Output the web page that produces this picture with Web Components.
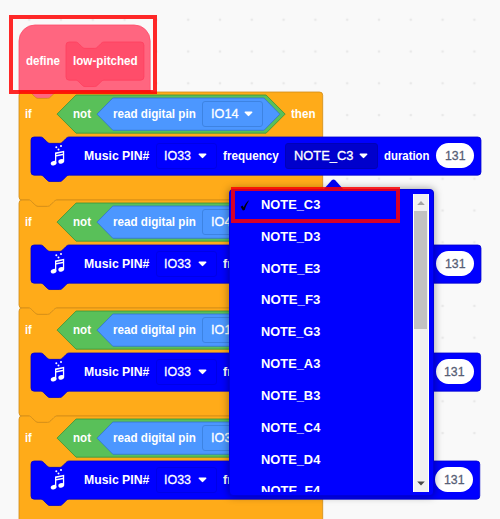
<!DOCTYPE html>
<html lang="en"><head><meta charset="utf-8"><title>Block workspace</title>
<style>
html,body{margin:0;width:500px;height:519px;overflow:hidden;background:#f9f9f9;font-family:"Liberation Sans",Arial,sans-serif}
</style></head><body>
<block-workspace>
  <define-block></define-block>
  <if-block pin="IO14"></if-block>
  <if-block pin="IO4" covered></if-block>
  <if-block pin="IO1" end="565.5" covered></if-block>
  <if-block pin="IO3" end="564.5" covered></if-block>
  <note-menu slot="overlay"></note-menu>
  <mark-box slot="overlay" style="left:9px;top:15px;width:140px;height:71px"></mark-box>
  <mark-box slot="overlay" style="left:231px;top:187px;width:160.5px;height:28px"></mark-box>
</block-workspace>
<script>
const K = 0.795; // size of one block unit in px
const NOTCH = 'c2,0 3,1 4,2 l4,4 c1,1 2,2 4,2 h12 c2,0 3,-1 4,-2 l4,-4 c1,-1 2,-2 4,-2';
const TAB = 'c-2,0 -3,1 -4,2 l-4,4 c-1,1 -2,2 -4,2 h-12 c-2,0 -3,-1 -4,-2 l-4,-4 c-1,-1 -2,-2 -4,-2';
const commandPath = (w, h) => `M0,4 a4,4 0 0,1 4,-4 H12 ${NOTCH} H${w-4} a4,4 0 0,1 4,4 V${h-4} a4,4 0 0,1 -4,4 H48 ${TAB} H4 a4,4 0 0,1 -4,-4 z`;
const shape = (d, fill, stroke) => `<svg class="shape" width="1" height="1"><path transform="scale(${K})" d="${d}" fill="${fill}" stroke="${stroke}"/></svg>`;
const BASE = `:host{display:block;position:relative;box-sizing:border-box;flex:none}
.shape{position:absolute;left:0;top:0;overflow:visible;z-index:0}
.row{display:flex;align-items:center;position:relative;height:100%}`;

class BlockElement extends HTMLElement {
  connectedCallback() {
    if (this.shadowRoot) return;
    this.attachShadow({mode:'open'}).innerHTML = `<style>${BASE}${this.css()}</style>${this.markup()}`;
    this.ready();
  }
  css() { return ''; }
  markup() { return '<slot></slot>'; }
  ready() {}
  get(name, fallback) { return this.getAttribute(name) ?? fallback; }
}

// A one-line label condensed to fill the width in "w"
customElements.define('block-label', class extends BlockElement {
  css() { const thin = this.get('weight','700') === '400';
    return `:host{width:${this.get('w')}px;margin-left:${this.get('gap',0)}px;height:16px;line-height:16px;font-size:13.6px;font-weight:${this.get('weight','700')};color:${this.get('color','#fff')};${thin?'-webkit-text-stroke:.3px currentColor;':''}}
    span{display:inline-block;white-space:pre;transform-origin:0 50%}`; }
  markup() { return '<span><slot></slot></span>'; }
  ready() {
    const s = this.shadowRoot.querySelector('span');
    const natural = s.getBoundingClientRect().width;
    if (natural) s.style.transform = `scaleX(${this.get('w') / natural})`;
  }
});

customElements.define('block-select', class extends BlockElement {
  css() { return `:host{display:flex;align-items:center;justify-content:space-between;width:${this.get('w')}px;height:26px;margin-left:${this.get('gap',0)}px;padding:0 9px 0 7.7px;border:1px solid ${this.get('line')};border-radius:3px;background:${this.get('fill','transparent')}}
    svg{flex:none}`; }
  markup() { return `<block-label w="${this.get('tw')}" weight="400">${this.get('value')}</block-label>
    <svg width="9" height="6" viewBox="0 0 9 6"><path d="M1.2,.5 H7.8 Q9,.7 8.2,1.7 L5.2,4.8 Q4.5,5.5 3.8,4.8 L.8,1.7 Q0,.7 1.2,.5z" fill="#fff"/></svg>`; }
});

customElements.define('music-icon', class extends BlockElement {
  css() { return ':host{width:16px;height:24px;margin-left:19px} svg{display:block}'; }
  markup() { return `<svg width="16" height="24" viewBox="0 0 16 24" fill="#fff">
    <ellipse cx="3.6" cy="19.2" rx="2.9" ry="2.2" transform="rotate(-20 3.6 19.2)"/><ellipse cx="11.2" cy="17.4" rx="2.9" ry="2.2" transform="rotate(-20 11.2 17.4)"/>
    <path d="M5,8.4 L14.2,6.7 V17.5 H12.9 V11.2 L6.3,12.5 V19.3 H5z M6.3,9.9 V11 L12.9,9.7 V8.5z" fill-rule="evenodd"/>
    <circle cx="6.3" cy="3.2" r="1"/><circle cx="8.5" cy="5.4" r="1"/><circle cx="11" cy="2" r="1"/></svg>`; }
});

customElements.define('block-prototype', class extends BlockElement {
  css() { return ':host{width:78px;height:39px;margin-left:6px} .row{padding-left:7px}'; }
  markup() { return shape(commandPath(98,48), '#ff4d6a', '#ff3f5f') + '<div class="row"><block-label w="64.7">low-pitched</block-label></div>'; }
});

customElements.define('define-block', class extends BlockElement {
  css() { return ':host{height:67.3px;width:131px} .row{padding:5px 0 0 7px;box-sizing:border-box}'; }
  markup() { return shape(`M0,20 a20,20 0 0,1 20,-20 H145 a20,20 0 0,1 20,20 V84.6 H48 ${TAB} H0z`, '#ff6680', '#ff4d6a') +
    '<div class="row"><block-label w="34">define</block-label><block-prototype></block-prototype></div>'; }
});

customElements.define('pin-reporter', class extends BlockElement {
  css() { return ':host{width:183px;height:32px;margin-left:6px} .row{padding-left:15.5px}'; }
  markup() { return shape('M20,0 H210 L230,20.3 L210,40.6 H20 L0,20.3z', '#4c97ff', '#3373cc') +
    `<div class="row"><block-label w="82.8">read digital pin</block-label><block-select gap="6.8" w="60.4" tw="${this.get('pin').length>3?27.6:20.5}" value="${this.get('pin')}" line="#3d83e2"></block-select></div>`; }
});

customElements.define('not-operator', class extends BlockElement {
  css() { return ':host{width:228px;height:38.5px;margin-left:25px} .row{padding-left:16.3px}'; }
  markup() { return shape('M24,0 H263 L287,24 L263,48 H24 L0,24z', '#59c059', '#389438') +
    `<div class="row"><block-label w="18">not</block-label><pin-reporter pin="${this.get('pin')}"></pin-reporter></div>`; }
});

customElements.define('music-block', class extends BlockElement {
  css() { return `:host{height:38.2px;width:450px;margin-left:12.7px} .row{width:450px}
    .gap{flex:none}
    .pill{flex:none;display:flex;align-items:center;justify-content:center;box-sizing:border-box;width:38px;height:25.5px;margin-left:6.5px;border-radius:13px;background:#fff}`; }
  markup() {
    const end = +this.get('end', 566), d = (566-end)*.8;
    // Behind an open menu only the start of the "frequency" label shows
    const middle = this.hasAttribute('covered')
      ? `<block-label gap="6" w="9">fr</block-label><div class="gap" style="width:${197.3-d}px"></div>`
      : `<block-label gap="6" w="55.8">frequency</block-label>
         <block-select gap="6.5" w="92.5" tw="59.4" value="NOTE_C3" line="#0000b8" fill="#0000cc"></block-select>
         <block-label gap="6" w="45.5">duration</block-label>`;
    return shape(commandPath(end,48), '#0000ff', '#0000cc') +
    `<div class="row"><music-icon></music-icon><block-label gap="17.8" w="65.3">Music PIN#</block-label>
    <block-select gap="6.2" w="61.4" tw="27" value="IO33" line="#0000e6"></block-select>
    ${middle}
    <div class="pill"><block-label w="20.5" weight="400" color="#575e75">131</block-label></div></div>`; }
});

customElements.define('if-block', class extends BlockElement {
  css() { return `:host{height:108px;width:304px} .head{height:44.2px} .head .row{padding-left:6.6px}
    .then{margin-left:6.4px}`; }
  markup() { const covered = this.hasAttribute('covered');
    return shape(commandPath(382,136), '#ffab19', '#cf8b17') +
    `<div class="head"><div class="row"><block-label w="6.7">if</block-label><not-operator pin="${this.get('pin')}"></not-operator>${covered?'':'<block-label class="then" w="24.5">then</block-label>'}</div></div>
    <music-block end="${this.get('end',566)}" ${covered?'covered':''}></music-block>`; }
});

customElements.define('note-menu', class extends BlockElement {
  css() { return `:host{position:absolute;left:229px;top:189px;width:204.5px;height:307px;border:1px solid #0000d8;border-radius:4px;background:#00f;box-shadow:0 0 9px rgba(0,0,0,.4);display:flex;padding:4px 4px 3px 0}
    .tip{position:absolute;left:93px;top:-11px}
    .list{flex:1;overflow:hidden;display:flex;flex-direction:column;margin-top:-5px;height:302.5px}
    .item{flex:none;height:31.84px;display:flex;align-items:center}
    .check{width:31.3px;height:16px;display:block}
    .bar{box-sizing:border-box;width:16px;border:1px solid #fff;border-width:0 1px;background:#f0f0f0;display:flex;flex-direction:column;align-items:center}
    .bar svg{flex:none;display:block}.thumb{width:13px;height:118px;background:#c1c1c1}.rest{flex:1}`; }
  markup() {
    const notes = ['C3','D3','E3','F3','G3','A3','B3','C4','D4','E4'];
    return `<svg class="tip" width="21" height="12"><path d="M0,11 L8.5,1.5 Q10.5,-.5 12.5,1.5 L21,11z" fill="#0000f0"/></svg>
    <div class="list">${notes.map((n,i)=>`<div class="item"><span class="check">${i?'':'<svg width="24" height="16"><path d="M10.6,9.8 L12.6,8.5 L13.7,10.6 C15,7.5 16.7,4.9 19.2,3 C17.4,6.2 15.8,9.4 14.7,13 L12.9,13.4z" fill="#000010"/></svg>'}</span><block-label w="59.3">NOTE_${n}</block-label></div>`).join('')}</div>
    <div class="bar"><svg width="14" height="17"><path d="M3.2,11 L7,7 L10.8,11z" fill="#a3a3a3"/></svg><div class="thumb"></div><div class="rest"></div><svg width="14" height="17"><path d="M3.2,6.5 L7,10.5 L10.8,6.5z" fill="#484848"/></svg></div>`;
  }
});

customElements.define('mark-box', class extends BlockElement {
  css() { return ':host{position:absolute;box-sizing:content-box;border:4px solid rgba(255,0,0,.84)}'; }
});

customElements.define('block-workspace', class extends BlockElement {
  css() { return `:host{width:500px;height:519px;overflow:hidden;background:#f9f9f9}
    .grid{position:absolute;left:0;top:0}
    .stack{display:flex;flex-direction:column;align-items:flex-start;padding:25.1px 0 0 18.8px;position:relative}`; }
  markup() { return `<svg class="grid" width="500" height="519"><defs><pattern id="dots" x="13.3" y="3.8" width="31.8" height="31.8" patternUnits="userSpaceOnUse"><path d="M14.6,15.9 h2.6 M15.9,14.6 v2.6" stroke="#e4e4e4" stroke-width="1"/></pattern></defs><rect width="500" height="519" fill="url(#dots)"/></svg>
    <div class="stack"><slot></slot></div><slot name="overlay"></slot>`; }
});
</script>
</body></html>
